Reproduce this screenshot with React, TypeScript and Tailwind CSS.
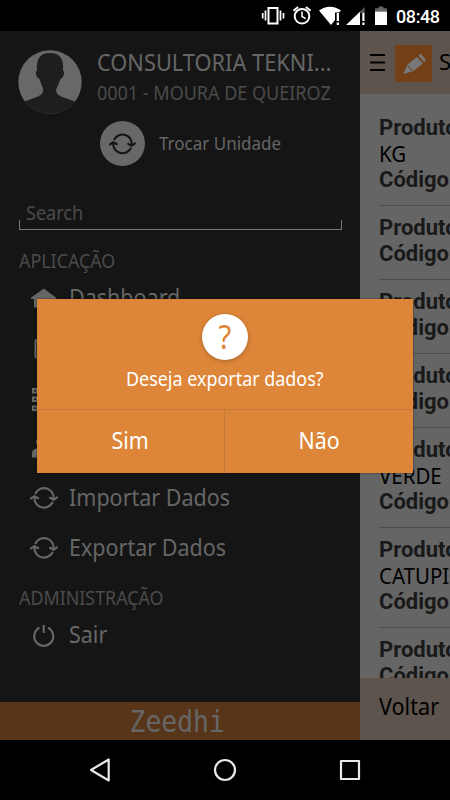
import type { ReactNode } from "react";

const products = [
    { detail: "KG" },
    { detail: "" },
    { detail: "" },
    { detail: "" },
    { detail: "VERDE" },
    { detail: "CATUPIRY" },
    { detail: "" },
];

function SyncIcon({ className }: { className: string }) {
    return (
        <svg viewBox="0 0 28 24" className={className} fill="none" stroke="currentColor" strokeWidth="2.2" strokeLinecap="round" strokeLinejoin="round">
            <path d="M5.6 7.2A9.6 9.6 0 0 1 23.6 12.8M22.4 16.6A9.6 9.6 0 0 1 4.4 11.4" />
            <path d="M20 11.8l3.6 2 3.3-2.4M1.1 12.4l3.4-2.2 3.6 2" />
        </svg>
    );
}

function StatusBar() {
    return (
        <div className="flex h-[31px] shrink-0 items-center bg-black text-white">
            <svg className="ml-[261px] h-[31px] w-[134px] shrink-0" viewBox="261 0 134 31" fill="currentColor">
                <path d="M268.500 8h9v15.500h-9z" fill="none" stroke="currentColor" strokeWidth="2" />
                <path d="M265.500 10.500v10M280.500 10.500v10M262.700 13v5.500M283.500 13v5.500" stroke="currentColor" strokeWidth="1.700" />
                <g fill="none" stroke="currentColor" strokeWidth="2">
                    <circle cx="302" cy="16.200" r="7.300" />
                    <path d="M302 11.500v5l3.600 2.200" strokeWidth="1.500" />
                    <path d="M293.400 10.800l4.700-3.900M310.600 10.800l-4.700-3.900" />
                </g>
                <path d="M319 10.600C325.500 5.500 334.500 5.500 341 10.600L339 12.500H335V20L331 25Z" />
                <path d="M336.700 13h2.300v8h-2.300zM336.700 22.600h2.300v2.400h-2.300z" />
                <path d="M364.700 7v6H358.700z" opacity=".35" />
                <path d="M360 11.700V25H346z" />
                <path d="M362.300 13h2.200v8h-2.200zM362.300 22.600h2.200v2.400h-2.200z" />
                <path d="M375 8.200h3.700V6.500h4.600v1.700h3.700v4h-12z" opacity=".4" />
                <path d="M375 11.700h12V25h-12z" />
            </svg>
            <span className="mt-px ml-[1px] font-['Roboto',sans-serif] text-[18px] leading-[31px] font-medium tracking-[-0.4px]">08:48</span>
        </div>
    );
}

function MenuItem({ icon, label }: { icon: ReactNode; label?: string }) {
    return (
        <div className="flex h-[50px] items-center pl-[30px]">
            <div className="flex w-[39px] items-center">{icon}</div>
            <span className="origin-left scale-x-[0.935] text-[23px] leading-[30px]">{label}</span>
        </div>
    );
}

function Drawer() {
    return (
        <div className="flex w-[360px] shrink-0 flex-col bg-[#151515] text-[#666]">
            <div className="flex h-[81px] pt-[19px] pl-[18px]">
                <svg className="h-[64px] w-[64px] shrink-0" viewBox="0 0 64 64">
                    <defs>
                        <clipPath id="avatar"><circle cx="32" cy="32" r="31.700" /></clipPath>
                    </defs>
                    <g clipPath="url(#avatar)">
                        <path fill="#686868" d="M0 0h64v64H0z" />
                        <path fill="#1e1e1e" d="M0 54L20 46.500C26 43.500 26.200 40 23.700 35.500L21.500 29C18 27.800 17 21.500 19 20.500C18 9 22 3 32 3S46 9 45 20.500C47 21.500 46 27.800 42.500 29L40 35.500C37 40 37.500 43.500 43 46.500L64 54V64H0Z" />
                    </g>
                </svg>
                <div className="ml-[15px] w-[240px] whitespace-nowrap">
                    <div className="mt-[-3px] origin-left scale-x-[0.948] text-[23px] leading-[31px]">CONSULTORIA TEKNI...</div>
                    <div className="origin-left scale-x-[0.947] text-[19px] leading-[31px] text-[#4b4b4b]">0001 - MOURA DE QUEIROZ</div>
                </div>
            </div>
            <div className="mt-[9px] ml-[100px] flex h-[45px] items-center">
                <div className="flex size-[45px] items-center justify-center rounded-full bg-[#686868] text-[#151515]">
                    <SyncIcon className="h-[24px] w-[27px]" />
                </div>
                <span className="mt-[-2px] ml-[14px] origin-left scale-x-[0.945] text-[18px] leading-6">Trocar Unidade</span>
            </div>
            <div className="mt-[36px] ml-[19px] flex h-[28px] w-[323px] flex-col">
                <span className="ml-[7px] h-[18px] origin-left scale-x-[0.95] text-[19px] leading-[22px] text-[#4b4b4b]">Search</span>
                <div className="h-[10px] border border-t-0 border-[#777]" />
            </div>
            <div className="mt-[18px] ml-[19px] h-[24px] origin-left scale-x-[0.94] text-[19px] leading-[26px] text-[#4b4b4b]">APLICAÇÃO</div>
            <MenuItem
                icon={<svg className="mt-[2px] h-[24px] w-[28px]" viewBox="0 0 28 24" fill="currentColor"><path d="M13.700 2.500L26 11.500Q27 13 25 13H23V21.500H4V13H2Q0 13 1.300 11.500Z" /></svg>}
                label="Dashboard"
            />
            <MenuItem icon={<svg className="mt-[3px] h-[24px] w-[28px]" viewBox="0 0 28 24" fill="none" stroke="currentColor" strokeWidth="2"><rect x="5.500" y="3" width="18" height="17.500" rx="1.500" /></svg>} />
            <MenuItem icon={<svg className="mt-[3px] h-[26px] w-[28px]" viewBox="0 0 28 26" fill="none" stroke="currentColor" strokeWidth="2"><path d="M3 3h4v3.500H3zM3 11.500h4v3.500H3zM3 20.500h4v3.500H3zM10 4.500h15M10 13.500h15M10 22h15" /></svg>} />
            <MenuItem icon={<svg className="h-[24px] w-[28px]" viewBox="0 0 28 24" fill="currentColor"><circle cx="11" cy="7" r="5" /><path d="M2 22.500v-4q0-4 4-5h8q4 1 4 5v4z" /></svg>} />
            <MenuItem icon={<SyncIcon className="mt-[1px] h-[24px] w-[28px]" />} label="Importar Dados" />
            <MenuItem icon={<SyncIcon className="mt-[1px] h-[24px] w-[28px]" />} label="Exportar Dados" />
            <div className="mt-[13px] ml-[19px] h-[24px] origin-left scale-x-[0.94] text-[19px] leading-[26px] text-[#4b4b4b]">ADMINISTRAÇÃO</div>
            <MenuItem
                icon={<svg className="mt-[3px] h-[24px] w-[28px]" viewBox="0 0 28 24" fill="none" stroke="currentColor" strokeWidth="2.200"><path d="M9.500 3.800A9.500 9.500 0 1 0 18 3.800M13.700 1V9" /></svg>}
                label="Sair"
            />
            <div className="mt-auto flex h-[38px] items-center justify-center bg-[#583519] pr-[5px] font-['DejaVu_Sans_Mono',monospace] text-[30px] leading-[40px]">
                <span className="mt-[2px] scale-x-[0.88]">Zeedhi</span>
            </div>
        </div>
    );
}

function ProductPage() {
    return (
        <div className="flex w-[90px] flex-col overflow-hidden bg-[#656565] text-black">
            <div className="flex h-[63px] shrink-0 items-center bg-[#5d544e] pl-[10px]">
                <svg className="mt-[-2px] h-[20px] w-[15px] shrink-0" viewBox="0 0 15 20" stroke="currentColor" strokeWidth="2"><path d="M0 3h15M0 10.500h15M0 18h15" /></svg>
                <div className="mt-[2px] ml-[10px] flex size-[37px] shrink-0 items-center justify-center bg-[#733f14]">
                    <svg className="h-[37px] w-[37px]" viewBox="0 0 37 37" fill="#777">
                        <path d="M8 29.300L12.500 19.500L22 12L28 18.500L18.500 26Z" />
                        <path d="M23.500 10.500L25.700 8.500L31 14.800L29 17Z" />
                        <path d="M12.500 20.500l5 5.500" stroke="#733f14" />
                    </svg>
                </div>
                <span className="mt-[-3px] ml-[7px] text-[22px]">S</span>
            </div>
            <div className="flex h-[584px] flex-col overflow-hidden pt-[12px] pl-[19px] text-[22px] leading-[26px] whitespace-nowrap">
                {products.map((product, i) => (
                    <div key={i} className="shrink-0 border-b border-[#4d4d4d] pt-[9px] pb-[12px]">
                        <div className="font-['Roboto',sans-serif] text-[22px] font-bold text-[#191919]">Produto:</div>
                        {product.detail && <div className="mt-[-1px] mb-[1px] w-max origin-left scale-x-[0.93]">{product.detail}</div>}
                        <div className="font-['Roboto',sans-serif] text-[22px] font-bold text-[#191919]">Código:</div>
                    </div>
                ))}
            </div>
            <div className="flex h-[62px] shrink-0 items-center bg-[#5d544e] pb-[5px] pl-[19px] text-[23px]">
                <span className="origin-left scale-x-[0.94]">Voltar</span>
            </div>
        </div>
    );
}

function ExportDialog() {
    return (
        <div className="absolute top-[299px] left-[37px] flex h-[174px] w-[376px] flex-col bg-[#dd8639] text-white shadow-[0_0_2px_rgba(0,0,0,0.5)]">
            <div className="flex h-[110px] flex-col items-center pt-[15px]">
                <div className="flex size-[46px] items-center justify-center rounded-full bg-white text-[32px] leading-[46px] text-[#dd8639] shadow-[0_1px_4px_rgba(0,0,0,0.25)]">
                    <span className="scale-x-[0.92]">?</span>
                </div>
                <div className="mt-[6px] scale-x-[0.943] text-[19px] leading-[26px]">Deseja exportar dados?</div>
            </div>
            <div className="flex h-[64px] border-t border-[#c37a3a] text-[23px]">
                <button className="w-[188px] border-r border-[#c37a3a] pb-[3px]">
                    <span className="inline-block scale-x-[0.93]">Sim</span>
                </button>
                <button className="flex-1 pb-[3px]">
                    <span className="inline-block scale-x-[0.93]">Não</span>
                </button>
            </div>
        </div>
    );
}

function NavBar() {
    return (
        <div className="flex h-[60px] items-center justify-between bg-black px-[88px] text-[#e8e8e8]">
            <svg className="h-6 w-6" viewBox="0 0 24 24" fill="none" stroke="currentColor" strokeWidth="2.200" strokeLinejoin="round"><path d="M20.700 1.500V22.500L3 12Z" /></svg>
            <svg className="h-6 w-6" viewBox="0 0 24 24" fill="none" stroke="currentColor" strokeWidth="2.200"><circle cx="12" cy="12" r="10" /></svg>
            <svg className="h-6 w-6" viewBox="0 0 24 24" fill="none" stroke="currentColor" strokeWidth="2.200" strokeLinejoin="round"><path d="M3 3h18v18H3z" /></svg>
        </div>
    );
}

export default function App() {
    return (
        <div className="relative flex h-[800px] w-[450px] flex-col overflow-hidden bg-black font-['Noto_Sans','Open_Sans',sans-serif]">
            <StatusBar />
            <div className="flex h-[709px]">
                <Drawer />
                <ProductPage />
            </div>
            <NavBar />
            <ExportDialog />
        </div>
    );
}
